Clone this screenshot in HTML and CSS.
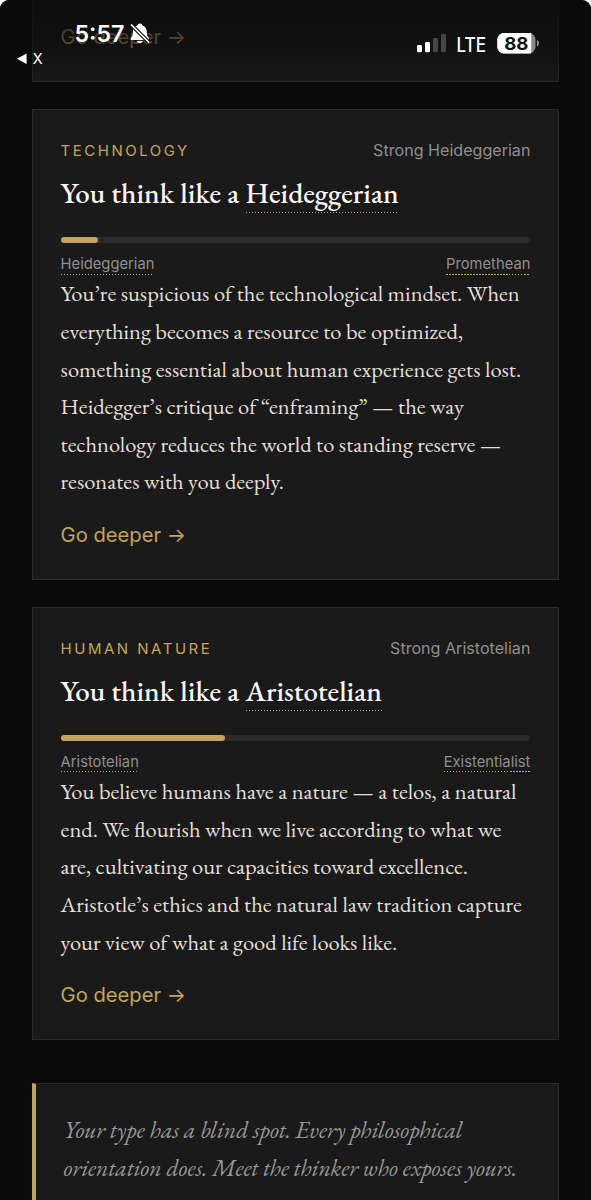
FILE: index.html
```
<!DOCTYPE html>
<html lang="en">
<head>
<meta charset="utf-8">
<meta name="viewport" content="width=device-width, initial-scale=1">
<title>Your philosophical type</title>
<link rel="stylesheet" href="styles.css">
</head>
<body>
<div class="screen">
  <main class="feed">
    <section class="card card-cut">
      <a class="deeper">Go deeper →</a>
    </section>

    <section class="card">
      <div class="card-head">
        <span class="topic">TECHNOLOGY</span>
        <span class="strength">Strong Heideggerian</span>
      </div>
      <h2 class="title">You think like a <span class="term">Heideggerian</span></h2>
      <div class="track"><div class="fill" style="width: 8%"></div></div>
      <div class="poles"><span class="term">Heideggerian</span><span class="term">Promethean</span></div>
      <p class="text">You’re suspicious of the technological mindset. When<br>everything becomes a resource to be optimized,<br>something essential about human experience gets lost.<br>Heidegger’s critique of “enframing” — the way<br>technology reduces the world to standing reserve —<br>resonates with you deeply.</p>
      <a class="deeper">Go deeper →</a>
    </section>

    <section class="card">
      <div class="card-head">
        <span class="topic">HUMAN NATURE</span>
        <span class="strength">Strong Aristotelian</span>
      </div>
      <h2 class="title">You think like a <span class="term">Aristotelian</span></h2>
      <div class="track"><div class="fill" style="width: 35%"></div></div>
      <div class="poles"><span class="term">Aristotelian</span><span class="term">Existentialist</span></div>
      <p class="text">You believe humans have a nature — a telos, a natural<br>end. We flourish when we live according to what we<br>are, cultivating our capacities toward excellence.<br>Aristotle’s ethics and the natural law tradition capture<br>your view of what a good life looks like.</p>
      <a class="deeper">Go deeper →</a>
    </section>

    <blockquote class="quote">Your type has a blind spot. Every philosophical<br>orientation does. Meet the thinker who exposes yours.</blockquote>
  </main>

  <header class="status">
    <svg class="status-art" width="591" height="100" viewBox="0 0 591 100">
      <text class="clock" x="74.5" y="42.3" textLength="50" lengthAdjust="spacingAndGlyphs">5:57</text>
      <!-- muted bell -->
      <path fill="#fff" d="M139.900 23.500c1.500 0 2.400.8 2.600 2 2.900 1 4.300 3.400 4.300 6.600 0 3.200.7 4.500 2 5.900.7.800.3 1.900-.8 1.900h-16.300c-1.100 0-1.400-1.100-.8-1.900 1.400-1.400 2-2.700 2-5.900 0-3.200 1.500-5.600 4.400-6.600.2-1.200 1.100-2 2.600-2zM136.700 41h6.200c-.4 1.400-1.500 2.200-3.100 2.200s-2.700-.8-3.100-2.200z"/>
      <path stroke="#111" stroke-width="3.800" d="M131.300 24.800l17.400 17.400"/>
      <path stroke="#fff" stroke-width="1.700" stroke-linecap="round" d="M131.500 25l17 17"/>
      <path fill="#fff" d="M17 58.800l9.600-5.200v10.400z"/>
      <text class="back" x="32.700" y="64">X</text>
      <g fill="#fff">
        <rect x="417" y="45" width="5" height="7.300" rx="1.400"/>
        <rect x="425" y="42" width="5" height="10.300" rx="1.400"/>
        <rect x="433" y="38" width="5" height="14.300" rx="1.400" fill="#454545"/>
        <rect x="441" y="34" width="5" height="18.300" rx="1.400" fill="#454545"/>
      </g>
      <text class="network" x="456.500" y="51.700" textLength="29.500" lengthAdjust="spacingAndGlyphs">LTE</text>
      <rect x="497.300" y="33" width="38.200" height="20.500" rx="6.500" fill="#8c8c8c"/>
      <path fill="#fff" d="M503.800 33H531.200V53.500H503.800a6.500 6.500 0 0 1-6.500-6.500V39.500a6.500 6.500 0 0 1 6.500-6.500z"/>
      <path fill="#8c8c8c" d="M536.900 40c1.400.6 2.100 1.700 2.100 3.300s-.7 2.700-2.100 3.300z"/>
      <text class="charge" x="504.200" y="50" textLength="24.300" lengthAdjust="spacingAndGlyphs">88</text>
    </svg>
  </header>
</div>
</body>
</html>
```

FILE: styles.css
```
html {
  background: #fff;
}

body {
  margin: 0;
  font-family: Inter, "Liberation Sans", sans-serif;
}

.screen {
  position: relative;
  height: 1200px;
  overflow: hidden;
  background: #0a0a0a;
  border-radius: 9px 9px 0 0;
}

.feed {
  display: flex;
  flex-direction: column;
  gap: 27px;
  padding: 0 32px;
}

.card {
  box-sizing: border-box;
  flex: none;
  display: flex;
  flex-direction: column;
  padding: 28px 27.6px 28.8px 27.6px;
  border: 1px solid #2b2b2b;
  background: #1a1a1a;
}

.card-cut {
  border-top: 0;
  padding-top: 22.1px;
}

.card-head {
  display: flex;
  justify-content: space-between;
  align-items: baseline;
  height: 24px;
  line-height: 24px;
}

.topic {
  color: #c4a55a;
  font-size: 15px;
  letter-spacing: 2.5px;
}

.strength {
  color: #8f8f8f;
  font-size: 16.1px;
}

.title {
  margin: 11px 0 0;
  font: 500 29px/40px "EB Garamond", "Liberation Serif", serif;
  color: #faf8f5;
  white-space: nowrap;
}

.term {
  padding-bottom: 1.5px;
  background: repeating-linear-gradient(90deg, #c4a55a 0 1.5px, transparent 1.5px 3px) bottom / 100% 1.4px no-repeat;
}

.track {
  height: 6px;
  margin-top: 24px;
  border-radius: 3px;
  background: #2a2a2a;
}

.fill {
  height: 100%;
  border-radius: 3px;
  background: #c2a45f;
}

.poles {
  display: flex;
  justify-content: space-between;
  align-items: flex-start;
  height: 20px;
  margin-top: 12.6px;
  font-size: 14.75px;
  color: #8f8f8f;
}

.text {
  margin: 0;
  font: 22.56px/37.6px "EB Garamond", "Liberation Serif", serif;
  color: #e3dfd8;
  white-space: nowrap;
}

.deeper {
  margin-top: 18.8px;
  color: #c2a45f;
  font-size: 20.2px;
  line-height: 30px;
}

.card-cut .deeper {
  margin-top: 0;
}

.quote {
  flex: none;
  height: 160px;
  margin: 15.8px 0 0;
  padding: 27.4px 0 0 27.5px;
  border: 1px solid #2b2b2b;
  border-left: 4px solid #c2a45f;
  background: #1a1a1a;
  color: #979797;
  font: italic 23.63px/37.6px "EB Garamond", "Liberation Serif", serif;
  white-space: nowrap;
}

.status {
  position: absolute;
  top: 0;
  left: 0;
  width: 100%;
  height: 100px;
  background: linear-gradient(rgba(10, 10, 10, .8), rgba(10, 10, 10, .62) 40%, rgba(10, 10, 10, .2) 75%, rgba(10, 10, 10, 0));
}

.status-art {
  display: block;
}

.status text {
  fill: #fff;
}

.clock {
  font-size: 23px;
  font-weight: 600;
}

.back {
  font-size: 14.5px;
}

.network {
  font-size: 19.5px;
  font-weight: 500;
}

.status .charge {
  fill: #111;
  font-size: 18px;
  font-weight: 700;
}
```
